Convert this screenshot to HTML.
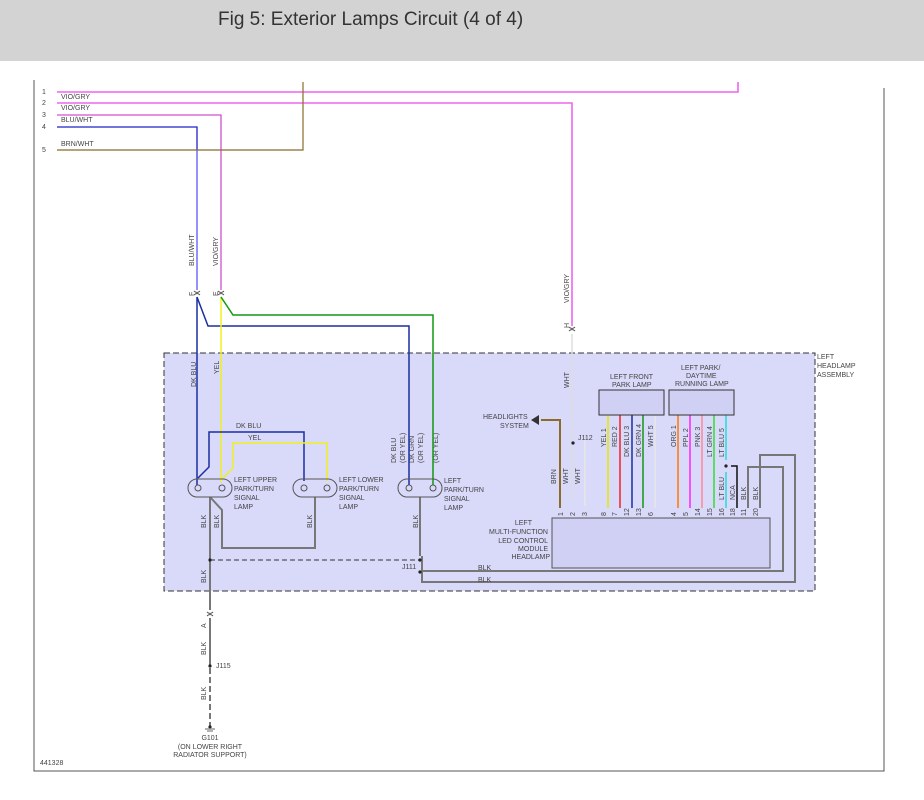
<!DOCTYPE html>
<html><head><meta charset="utf-8"><style>
body{margin:0;width:924px;height:800px;background:#fff;overflow:hidden;font-family:"Liberation Sans",sans-serif}
#hd{position:absolute;left:0;top:0;width:924px;height:61px;background:#d3d3d3}
#hd div{position:absolute;left:218px;top:9px;font-size:19px;color:#333}
svg{position:absolute;left:0;top:0}
text{font-family:"Liberation Sans",sans-serif;font-size:7px;fill:#444}
</style></head><body>
<div id="hd"><div>Fig 5: Exterior Lamps Circuit (4 of 4)</div></div>
<svg width="924" height="800" viewBox="0 0 924 800">
<path d="M34 80V771H884V88" fill="none" stroke="#555" stroke-width="1"/>
<rect x="164" y="353" width="651" height="238" fill="#d9d9fa" stroke="#333" stroke-dasharray="6,3"/>
<path d="M57 92H738V82" fill="none" stroke="#ee66ee" stroke-width="1.6"/>
<path d="M57 103H572V326" fill="none" stroke="#ee66ee" stroke-width="1.6"/>
<path d="M57 115H221V290" fill="none" stroke="#d050d0" stroke-width="1.3"/>
<path d="M57 127H197V290" fill="none" stroke="#2020cc" stroke-width="1.3"/>
<path d="M197 150V290" fill="none" stroke="#8888ff" stroke-width="1.6"/>
<path d="M57 150H303V82" fill="none" stroke="#8b6a2a" stroke-width="1.2"/>
<text x="42" y="94">1</text><text x="42" y="105">2</text><text x="42" y="117">3</text><text x="42" y="129">4</text><text x="42" y="152">5</text>
<text x="61" y="99">VIO/GRY</text><text x="61" y="110">VIO/GRY</text><text x="61" y="122">BLU/WHT</text><text x="61" y="146">BRN/WHT</text>
<g fill="none" stroke="#555" stroke-width="1">
<path d="M194 291q3 3 6 0M194 295q3 -3 6 0M218 291q3 3 6 0M218 295q3 -3 6 0M569 327q3 3 6 0M569 331q3 -3 6 0M207 612q3 3 6 0M207 616q3 -3 6 0"/>
</g>
<g transform="rotate(-90)">
<text x="-266" y="194">BLU/WHT</text><text x="-266" y="218">VIO/GRY</text><text x="-296" y="194">F</text><text x="-296" y="218">E</text>
<text x="-303" y="569">VIO/GRY</text><text x="-328" y="569">H</text>
<text x="-387" y="196">DK BLU</text><text x="-374" y="219">YEL</text><text x="-388" y="569">WHT</text>
<text x="-463" y="396">DK BLU</text><text x="-463" y="405">(OR YEL)</text><text x="-463" y="414">DK GRN</text><text x="-463" y="423">(OR YEL)</text><text x="-463" y="438">(OR YEL)</text>
<text x="-528" y="206">BLK</text><text x="-528" y="219">BLK</text><text x="-528" y="312">BLK</text><text x="-528" y="418">BLK</text><text x="-583" y="206">BLK</text>
<text x="-628" y="206">A</text><text x="-655" y="206">BLK</text><text x="-700" y="206">BLK</text>
<text x="-484" y="556">BRN</text><text x="-484" y="568">WHT</text><text x="-484" y="580">WHT</text>
<text x="-447" y="606">YEL 1</text><text x="-447" y="617">RED 2</text><text x="-457" y="629">DK BLU 3</text><text x="-457" y="641">DK GRN 4</text><text x="-447" y="653">WHT 5</text>
<text x="-447" y="676">ORG 1</text><text x="-447" y="688">PPL 2</text><text x="-447" y="700">PNK 3</text><text x="-457" y="712">LT GRN 4</text><text x="-457" y="724">LT BLU 5</text>
<text x="-500" y="724">LT BLU</text><text x="-500" y="735">NCA</text><text x="-500" y="746">BLK</text><text x="-500" y="758">BLK</text>
<text x="-516" y="563">1</text><text x="-516" y="575">2</text><text x="-516" y="587">3</text><text x="-516" y="606">8</text><text x="-516" y="617">7</text><text x="-516" y="629">12</text><text x="-516" y="641">13</text><text x="-516" y="653">6</text><text x="-516" y="676">4</text><text x="-516" y="688">5</text><text x="-516" y="700">14</text><text x="-516" y="712">15</text><text x="-516" y="724">16</text><text x="-516" y="735">18</text><text x="-516" y="746">11</text><text x="-516" y="758">20</text>
</g>
<g fill="none" stroke-width="1.5">
<path d="M197 297V485" stroke="#1a2fa0"/>
<path d="M197 297L208 326H409V485" stroke="#1a2fa0"/>
<path d="M221 297V482" stroke="#f0f020"/>
<path d="M221 297L233 315H433V485" stroke="#119911"/>
<path d="M198 478L209 467V432H304V481" stroke="#1a2fa0"/>
<path d="M222 479L233 468V443H327V481" stroke="#f0f020"/>
<path d="M572 334V500" stroke="#dddddd"/>
<path d="M585 440V506" stroke="#e6e6e6"/>
<path d="M560 508V420H541" stroke="#8b6a2a" stroke-width="2"/>
<path d="M608 414V508" stroke="#e8e800"/><path d="M620 414V508" stroke="#ee2222"/><path d="M632 414V508" stroke="#1a2fa0"/><path d="M643 414V508" stroke="#119911"/><path d="M655 414V508" stroke="#e6e6e6"/>
<path d="M678 414V508" stroke="#ff7700"/><path d="M690 414V508" stroke="#ff22ff"/><path d="M702 414V508" stroke="#ff8899"/><path d="M714 414V508" stroke="#33dd33"/><path d="M726 414V460" stroke="#22dddd"/><path d="M726 472V508" stroke="#22dddd"/>
<path d="M731 466H737V508" stroke="#111"/>
<path d="M748 508V467H783V571H422" stroke="#777" stroke-width="2"/>
<path d="M760 508V455H795V582H422V556" stroke="#777" stroke-width="2"/>
<path d="M210 497V610M210 618V665" stroke="#777" stroke-width="2"/>
<path d="M210 497L222 510V548H315V497" stroke="#777" stroke-width="2"/>
<path d="M420 497V556" stroke="#777" stroke-width="2"/>
<path d="M210 560H420" stroke="#333" stroke-dasharray="5,3" stroke-width="1"/>
<path d="M210 668V726" stroke="#777" stroke-dasharray="6,3" stroke-width="2"/>
</g>
<path d="M531 420l8 -5v10z" fill="#333"/>
<g fill="#222"><circle cx="210" cy="560" r="1.6"/><circle cx="420" cy="560" r="1.6"/><circle cx="420" cy="572" r="1.6"/><circle cx="573" cy="443" r="1.6"/><circle cx="726" cy="466" r="1.6"/><circle cx="210" cy="666" r="1.6"/><circle cx="210" cy="727" r="1.6"/></g>
<path d="M205 729h10M207 731h6" stroke="#999" stroke-width="1.5"/>
<g fill="none" stroke="#555" stroke-width="1">
<rect x="188" y="479" width="44" height="18" rx="9"/><rect x="293" y="479" width="44" height="18" rx="9"/><rect x="398" y="479" width="44" height="18" rx="9"/>
<circle cx="198" cy="488" r="3"/><circle cx="222" cy="488" r="3"/><circle cx="304" cy="488" r="3"/><circle cx="327" cy="488" r="3"/><circle cx="409" cy="488" r="3"/><circle cx="433" cy="488" r="3"/>
</g>
<rect x="599" y="390" width="65" height="25" fill="#d0d0f5" stroke="#333"/>
<rect x="669" y="390" width="65" height="25" fill="#d0d0f5" stroke="#333"/>
<rect x="552" y="518" width="218" height="50" fill="#d0d0f5" stroke="#555"/>
<g>
<text x="236" y="428">DK BLU</text><text x="248" y="440">YEL</text>
<text x="234" y="482">LEFT UPPER</text><text x="234" y="491">PARK/TURN</text><text x="234" y="500">SIGNAL</text><text x="234" y="509">LAMP</text>
<text x="339" y="482">LEFT LOWER</text><text x="339" y="491">PARK/TURN</text><text x="339" y="500">SIGNAL</text><text x="339" y="509">LAMP</text>
<text x="444" y="483">LEFT</text><text x="444" y="492">PARK/TURN</text><text x="444" y="501">SIGNAL</text><text x="444" y="510">LAMP</text>
<text x="402" y="569">J111</text><text x="478" y="570">BLK</text><text x="478" y="582">BLK</text>
<text x="483" y="419">HEADLIGHTS</text><text x="500" y="428">SYSTEM</text><text x="578" y="440">J112</text>
<text x="610" y="379">LEFT FRONT</text><text x="612" y="387">PARK LAMP</text>
<text x="681" y="370">LEFT PARK/</text><text x="686" y="378">DAYTIME</text><text x="675" y="386">RUNNING LAMP</text>
<text x="817" y="359">LEFT</text><text x="817" y="368">HEADLAMP</text><text x="817" y="377">ASSEMBLY</text>
<text x="532" y="525" text-anchor="end">LEFT</text><text x="548" y="534" text-anchor="end">MULTI-FUNCTION</text><text x="548" y="543" text-anchor="end">LED CONTROL</text><text x="548" y="551" text-anchor="end">MODULE</text><text x="550" y="559" text-anchor="end">HEADLAMP</text>
<text x="216" y="668">J115</text>
<text x="210" y="740" text-anchor="middle">G101</text><text x="210" y="749" text-anchor="middle">(ON LOWER RIGHT</text><text x="210" y="757" text-anchor="middle">RADIATOR SUPPORT)</text>
<text x="40" y="765">441328</text>
</g>
</svg>
</body></html>
